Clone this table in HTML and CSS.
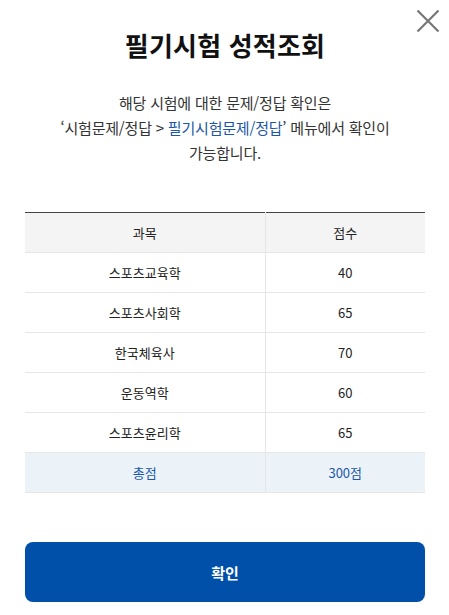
FILE: index.html
```html
<!DOCTYPE html>
<html lang="ko">
<head>
<meta charset="utf-8">
<link rel="stylesheet" href="styles.css">
</head>
<body>
<div class="modal">
  <button class="close" aria-label="닫기">
    <svg width="24" height="24" viewBox="0 0 24 24"><path d="M1.5 1.5L22.5 22.5M22.5 1.5L1.5 22.5" stroke="#777" stroke-width="2.2" fill="none"/></svg>
  </button>
  <h1 class="title">필기시험 성적조회</h1>
  <p class="desc">해당 시험에 대한 문제/정답 확인은<br>‘시험문제/정답 &gt; <span class="link">필기시험문제/정답</span>’ 메뉴에서 확인이<br>가능합니다.</p>
  <table class="score">
    <thead>
      <tr><th>과목</th><th>점수</th></tr>
    </thead>
    <tbody>
      <tr><td>스포츠교육학</td><td>40</td></tr>
      <tr><td>스포츠사회학</td><td>65</td></tr>
      <tr><td>한국체육사</td><td>70</td></tr>
      <tr><td>운동역학</td><td>60</td></tr>
      <tr><td>스포츠윤리학</td><td>65</td></tr>
      <tr class="total"><td>총점</td><td>300점</td></tr>
    </tbody>
  </table>
  <button class="confirm">확인</button>
</div>
</body>
</html>
```

FILE: styles.css
```css
* { box-sizing: border-box; }
html, body { margin: 0; padding: 0; background: #fff; }
body {
  font-family: "Noto Sans CJK KR", "Noto Sans", sans-serif;
  color: #222;
  width: 449px;
  height: 615px;
  overflow: hidden;
}
.modal {
  position: relative;
  padding: 28px 24px 0 25px;
  display: flex;
  flex-direction: column;
  align-items: stretch;
}
.close {
  position: absolute;
  top: 9px;
  right: 9px;
  width: 24px;
  height: 24px;
  padding: 0;
  border: 0;
  background: none;
  display: flex;
}
.title {
  margin: 0;
  text-align: center;
  font-size: 26px;
  font-weight: 700;
  line-height: 34px;
  color: #111;
  letter-spacing: 0.2px;
}
.desc {
  margin: 28px 0 0;
  text-align: center;
  font-size: 15px;
  line-height: 25px;
  color: #333;
  letter-spacing: -0.2px;
}
.link { color: #1b57a5; }
.score {
  margin-top: 47px;
  width: 400px;
  border-collapse: collapse;
  border-top: 1.5px solid #444;
  table-layout: fixed;
  font-size: 13px;
}
.score th, .score td {
  height: 40px;
  padding: 0;
  text-align: center;
  font-weight: 400;
  border-bottom: 1px solid #e6e6e6;
  border-right: 1px solid #e6e6e6;
  color: #222;
}
.score th:first-child, .score td:first-child { width: 240px; }
.score th:last-child, .score td:last-child { border-right: 0; }
.score thead th { background: #f4f4f4; }
.score .total td { background: #ebf3f9; color: #1b57a5; }
.confirm {
  margin-top: 49px;
  width: 400px;
  height: 60px;
  border: 0;
  border-radius: 8px;
  background: #0050aa;
  color: #fff;
  font-family: "Noto Sans CJK KR", sans-serif;
  font-size: 15px;
  font-weight: 700;
}
```
